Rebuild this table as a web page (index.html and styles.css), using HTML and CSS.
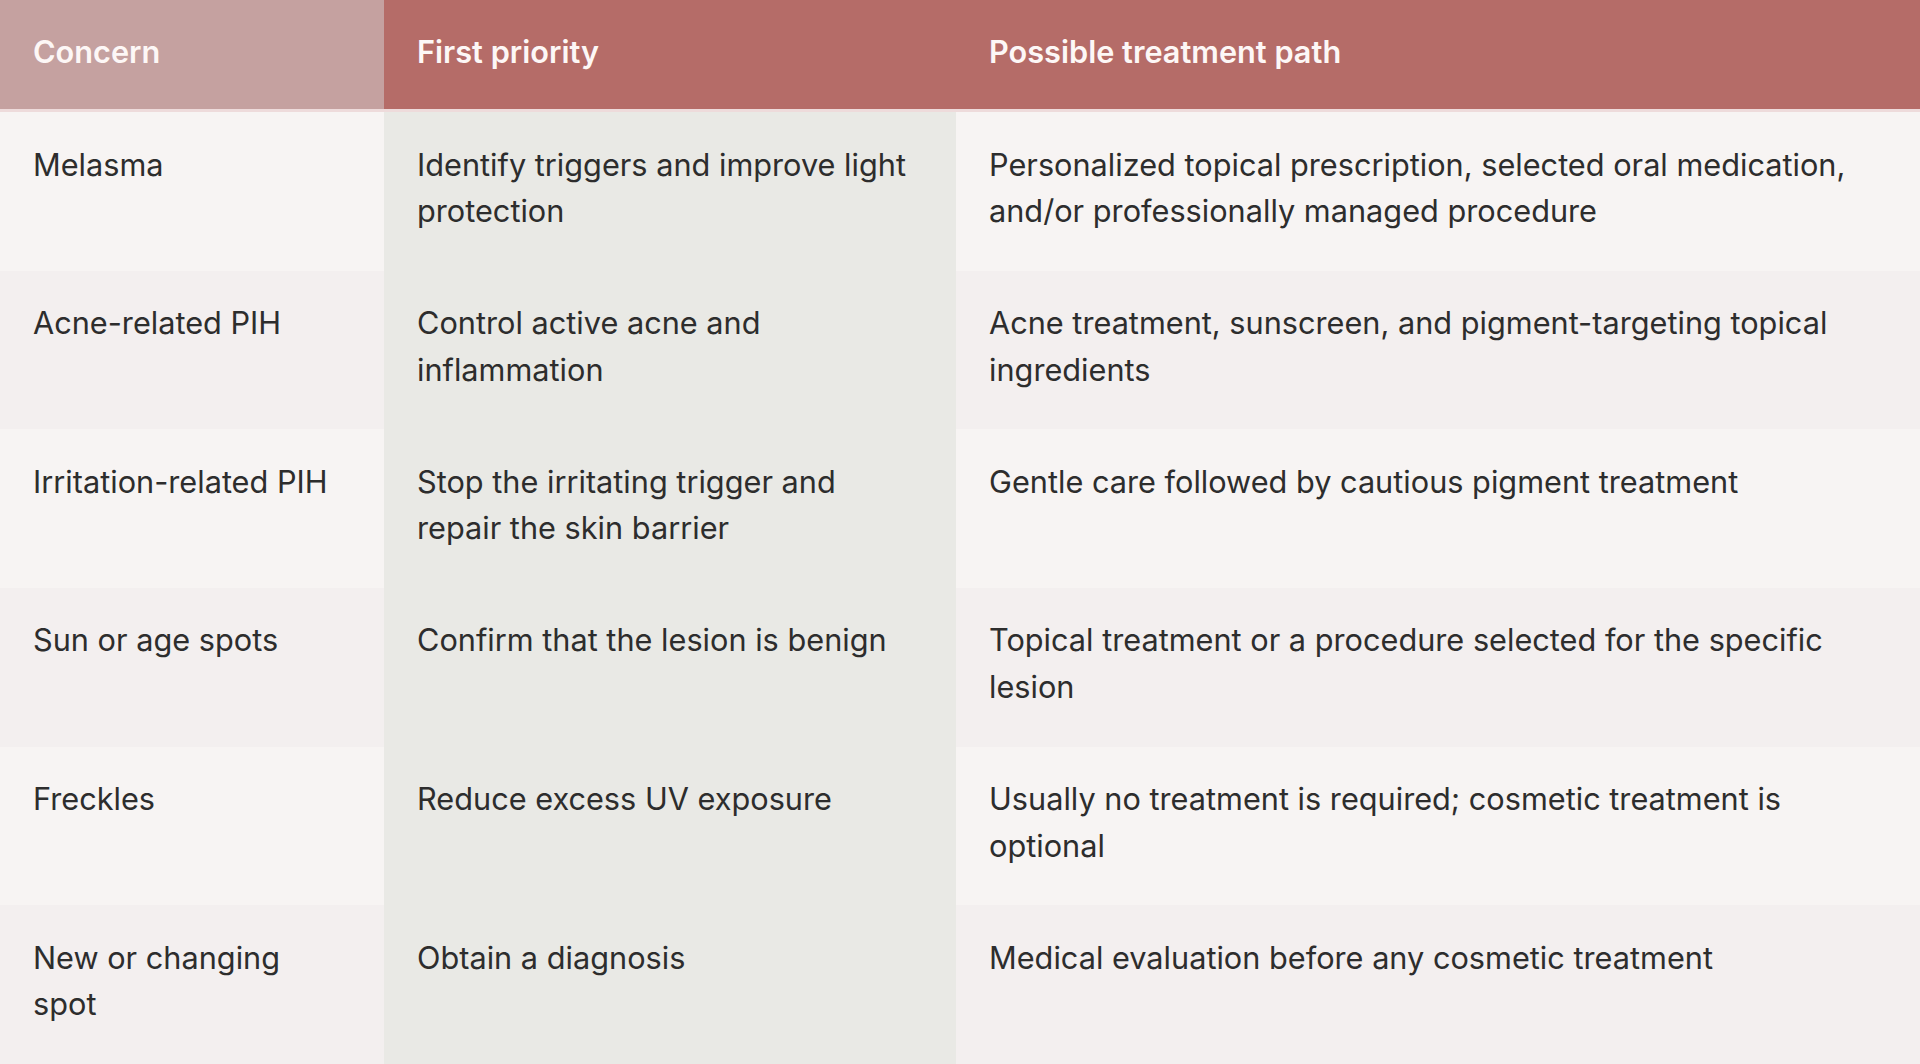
FILE: index.html
```html
<!DOCTYPE html>
<html lang="en">
<head>
<meta charset="utf-8">
<title>Pigmentation treatment priorities</title>
<link rel="stylesheet" href="styles.css">
</head>
<body>
<table class="care-table">
  <colgroup>
    <col class="col-concern">
    <col class="col-priority">
    <col class="col-path">
  </colgroup>
  <thead>
    <tr>
      <th class="h-concern">Concern</th>
      <th class="h-priority">First priority</th>
      <th class="h-path">Possible treatment path</th>
    </tr>
  </thead>
  <tbody>
    <tr>
      <td class="c-concern">Melasma</td>
      <td class="c-priority">Identify triggers and improve light protection</td>
      <td class="c-path">Personalized topical prescription, selected oral medication, and/or professionally managed procedure</td>
    </tr>
    <tr>
      <td class="c-concern">Acne-related PIH</td>
      <td class="c-priority">Control active acne and inflammation</td>
      <td class="c-path">Acne treatment, sunscreen, and pigment-targeting topical ingredients</td>
    </tr>
    <tr>
      <td class="c-concern">Irritation-related PIH</td>
      <td class="c-priority">Stop the irritating trigger and repair the skin barrier</td>
      <td class="c-path">Gentle care followed by cautious pigment treatment</td>
    </tr>
    <tr>
      <td class="c-concern">Sun or age spots</td>
      <td class="c-priority">Confirm that the lesion is benign</td>
      <td class="c-path">Topical treatment or a procedure selected for the specific lesion</td>
    </tr>
    <tr>
      <td class="c-concern">Freckles</td>
      <td class="c-priority">Reduce excess UV exposure</td>
      <td class="c-path">Usually no treatment is required; cosmetic treatment is optional</td>
    </tr>
    <tr>
      <td class="c-concern">New or changing spot</td>
      <td class="c-priority">Obtain a diagnosis</td>
      <td class="c-path">Medical evaluation before any cosmetic treatment</td>
    </tr>
  </tbody>
</table>
</body>
</html>
```

FILE: styles.css
```css
html, body {
  margin: 0;
  padding: 0;
  background: #f6f2f2;
}

body {
  font-family: Inter, "Noto Sans", "Liberation Sans", sans-serif;
  color: #2d2d2d;
  -webkit-font-smoothing: antialiased;
}

.care-table {
  width: 100%;
  height: 100vh;
  border-collapse: separate;
  border-spacing: 0;
  table-layout: fixed;
  font-size: 30.7px;
  line-height: 46.5px;
}

.col-concern { width: 384px; }
.col-priority { width: 572px; }
.col-path { width: auto; }

.care-table th,
.care-table td {
  text-align: left;
  vertical-align: top;
  padding: 29.5px 40px 0 33px;
}

.care-table thead tr {
  height: 112px;
}

.care-table th {
  font-weight: 600;
  color: #fdf7f6;
  background: #b56c68;
  border-bottom: 3px solid #eedbdb;
  padding-top: 29px;
}

.care-table th.h-concern {
  background: #c5a1a0;
}

.care-table tbody tr {
  height: 158.6px;
}

.care-table tbody tr:nth-child(odd) td {
  background: #f7f4f3;
}

.care-table tbody tr:nth-child(even) td {
  background: #f3efef;
}

.care-table tbody tr td.c-priority {
  background: #e9e9e5;
}
```
